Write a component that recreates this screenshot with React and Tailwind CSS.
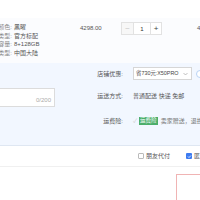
import React from "react";

const font = { fontFamily: '"Liberation Sans", "Noto Sans CJK SC", sans-serif' };

function Sku({ label, value }) {
  return (
    <div className="flex h-[8.6px] items-center leading-none whitespace-nowrap">
      <span className="w-[32px] shrink-0 text-right text-[#8a8a8a]">{label}</span>
      <span className="ml-[2px] text-[#555]">{value}</span>
    </div>
  );
}

function FormRow({ label, children, className }) {
  return (
    <div className={"flex items-center whitespace-nowrap " + (className || "")}>
      <span className="w-[35px] shrink-0 text-right text-[#555]">{label}</span>
      <div className="ml-[10px] flex items-center">{children}</div>
    </div>
  );
}

export default function App() {
  return (
    <div
      className="relative h-[200px] w-[200px] overflow-hidden bg-white text-[6px] leading-none"
      style={font}
    >
      {/* top white band */}
      <div className="h-[18px] bg-white" />

      {/* item row */}
      <div className="flex h-[45px] bg-[#fbfcfe]">
        <div className="ml-[-20px] w-[100px] shrink-0 pt-[4.7px]">
          <Sku label="机身颜色:" value="黑曜" />
          <Sku label="套餐类型:" value="官方标配" />
          <Sku label="存储容量:" value="8+128GB" />
          <Sku label="版本类型:" value="中国大陆" />
        </div>
        <div className="w-[41px] shrink-0 pt-[6.5px] text-[#555]">4298.00</div>
        <div className="mt-[4px] flex h-[13px] w-[41px] shrink-0 border border-[#e2e2e2] bg-white">
          <div className="flex w-[11px] items-center justify-center bg-[#f7f7f7] text-[8px] text-[#c8c8c8]">−</div>
          <div className="flex w-[18px] items-center justify-center border-x border-[#e2e2e2] text-[#333]">1</div>
          <div className="flex w-[10px] items-center justify-center text-[8px] text-[#444]">+</div>
        </div>
        <div className="ml-[35px] pt-[7px] whitespace-nowrap text-[#555]">4298.00</div>
      </div>

      {/* order options */}
      <div className="flex h-[83px] border-b border-[#dfe7f2] bg-[#f2f7ff]">
        <div className="ml-[-40px] w-[95px] shrink-0 pt-[25px]">
          <div className="relative h-[19px] w-[95px] border border-[#dcdcdc] bg-white">
            <span className="absolute bottom-[3px] right-[3px] text-[#aaa]">0/200</span>
          </div>
        </div>
        <div className="ml-[33px] flex flex-col pt-[4px]">
          <FormRow label="店铺优惠:" className="h-[13px]">
            <div className="flex h-[13px] w-[59px] shrink-0 items-center justify-between whitespace-nowrap border border-[#d6d6d6] bg-white pl-[2px] pr-[3px] text-[5.4px] text-[#444]">
              <span>省730元:X50PRO</span>
              <svg width="5" height="4" viewBox="0 0 10 6" fill="none" stroke="#999" strokeWidth="1.2">
                <path d="M1 1l4 4 4-4" />
              </svg>
            </div>
            <div className="ml-[4px] h-[8px] w-[8px] shrink-0 rounded-full border border-[#b9d3f5] bg-white" />
          </FormRow>
          <FormRow label="运送方式:" className="mt-[9.5px] h-[13px]">
            <span className="text-[#555]">普通配送 快递 免邮</span>
          </FormRow>
          <FormRow label="运费险:" className="mt-[12px] h-[13px]">
            <span className="text-[6px] text-[#ccc]">✓</span>
            <span className="ml-[2px] flex h-[8px] items-center bg-[#4cae6b] px-[1px] text-[5.5px] text-white">运费险</span>
            <span className="ml-[3px] text-[#777]">卖家赠送，退换货可赔</span>
          </FormRow>
        </div>
      </div>

      {/* checkboxes */}
      <div className="flex h-[21px] items-center whitespace-nowrap border-b border-[#f0f0f0] pl-[138px]">
        <div className="h-[6px] w-[6px] shrink-0 rounded-[1px] border border-[#bbb] bg-white" />
        <span className="ml-[2px] text-[#555]">朋友代付</span>
        <div className="ml-[16px] flex h-[6px] w-[6px] shrink-0 items-center justify-center rounded-[1px] bg-[#3d7bf0]">
          <svg width="5" height="5" viewBox="0 0 10 10" fill="none" stroke="#fff" strokeWidth="1.6">
            <path d="M2 5l2 2 4-4" />
          </svg>
        </div>
        <span className="ml-[2px] text-[#555]">匿名购买</span>
      </div>

      {/* red box */}
      <div className="ml-[176px] mt-[7px] h-[40px] w-[40px] border border-[#f0b4b4]" />
    </div>
  );
}
